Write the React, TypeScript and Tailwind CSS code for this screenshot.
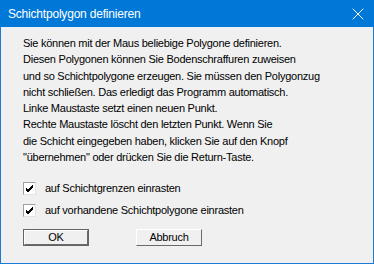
import { X } from 'lucide-react';

const lines = [
  'Sie können mit der Maus beliebige Polygone definieren.',
  'Diesen Polygonen können Sie Bodenschraffuren zuweisen',
  'und so Schichtpolygone erzeugen. Sie müssen den Polygonzug',
  'nicht schließen. Das erledigt das Programm automatisch.',
  'Linke Maustaste setzt einen neuen Punkt.',
  'Rechte Maustaste löscht den letzten Punkt. Wenn Sie',
  'die Schicht eingegeben haben, klicken Sie auf den Knopf',
  '"übernehmen" oder drücken Sie die Return-Taste.',
];

function Check({ label }: { label: string }) {
  return (
    <div className="flex items-center h-[13px]">
      <div className="w-[13px] h-[13px] bg-white border border-t-[#a0a0a0] border-l-[#a0a0a0] border-b-[#e3e3e3] border-r-[#e3e3e3] flex items-center justify-center">
        <svg width="9" height="9" viewBox="0 0 9 9">
          <path d="M1 4 L3 6 L8 1 M1 5 L3 7 L8 2 M1 6 L3 8 L8 3" stroke="#000" strokeWidth="1" fill="none" shapeRendering="crispEdges" />
        </svg>
      </div>
      <span className="ml-[9px]">{label}</span>
    </div>
  );
}

function Btn({ label, def }: { label: string; def?: boolean }) {
  return (
    <div className={def ? 'w-[66px] h-[17px] border border-[#646464]' : 'w-[66px] h-[17px]'}>
      <div className="h-full w-full bg-[#f0f0f0] border border-t-white border-l-white border-b-[#696969] border-r-[#696969] flex items-center justify-center">
        {label}
      </div>
    </div>
  );
}

export default function App() {
  return (
    <div
      className="w-[374px] h-[264px] flex flex-col text-black text-[11px] tracking-[-0.25px]"
      style={{ fontFamily: '"Liberation Sans", Arial, sans-serif' }}
    >
      {/* Title bar */}
      <div className="h-[27px] bg-[#0078d7] flex items-center justify-between pl-[8px] pr-[6px] text-white">
        <span className="text-[12px] tracking-[-0.2px]">Schichtpolygon definieren</span>
        <X className="w-[20px] h-[20px]" strokeWidth={1.2} />
      </div>

      {/* Body */}
      <div className="flex-1 bg-[#f0f0f0] border-x border-b border-[#1a7ad4] pl-[22px] pt-[8px]">
        <div className="leading-[16.25px]">
          {lines.map((l) => (
            <div key={l}>{l}</div>
          ))}
        </div>

        <div className="mt-[17px] flex flex-col gap-[9px]">
          <Check label="auf Schichtgrenzen einrasten" />
          <Check label="auf vorhandene Schichtpolygone einrasten" />
        </div>

        <div className="mt-[12px] flex gap-[47px]">
          <Btn label="OK" def />
          <Btn label="Abbruch" />
        </div>
      </div>
    </div>
  );
}
